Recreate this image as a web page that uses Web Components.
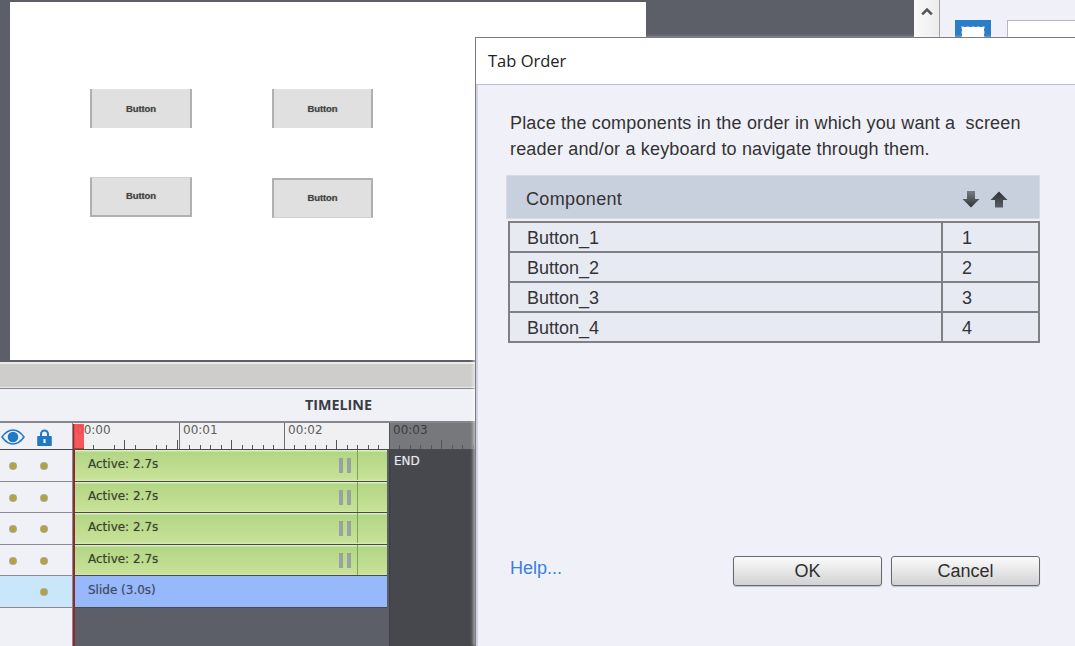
<!DOCTYPE html>
<html>
<head>
<meta charset="utf-8">
<title>Tab Order</title>
<style>
  html, body { margin: 0; height: 100%; overflow: hidden; background: #5c5f68; }
</style>
</head>
<body>
<app-shell>
  <stage-canvas slot="stage">
    <stage-button style="left:80px;top:87px;width:102px;height:39px" edges="sides">Button</stage-button>
    <stage-button style="left:262px;top:87px;width:101px;height:39px" edges="sides">Button</stage-button>
    <stage-button style="left:80px;top:175px;width:102px;height:40px" edges="bottom">Button</stage-button>
    <stage-button style="left:262px;top:176px;width:101px;height:40px" edges="top">Button</stage-button>
  </stage-canvas>
  <side-strip slot="side"></side-strip>
  <time-line slot="timeline">
    <track-row label="Active: 2.7s"></track-row>
    <track-row label="Active: 2.7s"></track-row>
    <track-row label="Active: 2.7s"></track-row>
    <track-row label="Active: 2.7s"></track-row>
    <track-row label="Slide (3.0s)" kind="slide"></track-row>
  </time-line>
  <tab-dialog slot="dialog" heading="Tab Order">
    <order-row name="Button_1" index="1"></order-row>
    <order-row name="Button_2" index="2"></order-row>
    <order-row name="Button_3" index="3"></order-row>
    <order-row name="Button_4" index="4" last></order-row>
  </tab-dialog>
</app-shell>

<script>
// page frame: top part, timeline below, dialog above everything
class AppShell extends HTMLElement {
  constructor() {
    super();
    this.attachShadow({ mode: "open" });
    this.shadowRoot.innerHTML = `
      <style>
        :host { display: flex; flex-direction: column; position: relative; width: 1075px; height: 646px; overflow: hidden; background: #5c5f68; }
        .top { display: flex; height: 362px; flex: none; overflow: hidden; }
      </style>
      <div class="top"><slot name="stage"></slot><slot name="side"></slot></div>
      <slot name="timeline"></slot>
      <slot name="dialog"></slot>
    `;
  }
}
customElements.define("app-shell", AppShell);

class StageCanvas extends HTMLElement {
  constructor() {
    super();
    this.attachShadow({ mode: "open" });
    this.shadowRoot.innerHTML = `
      <style>
        :host { display: block; flex: none; width: 914px; height: 362px; box-sizing: border-box; padding: 2px 268px 2px 10px; background: #5c5f68; }
        .paper { position: relative; height: 358px; background: #fff; }
      </style>
      <div class="paper"><slot></slot></div>
    `;
  }
}
customElements.define("stage-canvas", StageCanvas);

class StageButton extends HTMLElement {
  constructor() {
    super();
    this.attachShadow({ mode: "open" });
    const edge = "#b0b0b0";
    const kind = this.getAttribute("edges");
    const borders = {
      sides: `border-left:2px solid ${edge};border-right:2px solid ${edge};`,
      bottom: `border:1px solid #d0d0d0;border-left:2px solid ${edge};border-right:2px solid ${edge};border-bottom:2px solid ${edge};padding-bottom:2px;`,
      top: `border:1px solid #d0d0d0;border-left:2px solid ${edge};border-right:2px solid ${edge};border-top:2px solid ${edge};padding-bottom:2px;`,
    }[kind];
    this.shadowRoot.innerHTML = `
      <style>
        :host { display: flex; position: absolute; box-sizing: border-box; ${borders} background: #e0e0e0; align-items: center; justify-content: center;
          font: bold 9.500px "Liberation Sans", sans-serif; letter-spacing: -.1px; color: #444; text-shadow: 0 0 1px rgba(60,60,60,.5); }
      </style>
      <slot></slot>
    `;
  }
}
customElements.define("stage-button", StageButton);

// scrollbar and the bit of properties panel at the top right
class SideStrip extends HTMLElement {
  constructor() {
    super();
    this.attachShadow({ mode: "open" });
    this.shadowRoot.innerHTML = `
      <style>
        :host { display: flex; flex: 1; background: #f0f1f8; }
        .scroll { flex: none; width: 26px; box-sizing: border-box; border-right: 1px solid #a0a0a0; background: linear-gradient(90deg, #fafafa, #ececec); display: flex; justify-content: center; padding-top: 7px; }
        .scroll svg { display: block; }
        .panel { flex: 1; display: flex; align-items: flex-start; gap: 16px; padding: 20px 0 0 15px; overflow: hidden; }
        .swatch { flex: none; width: 36px; height: 40px; box-sizing: border-box; border: 7px solid #2a7dc9; background: #fff; outline: 1px dashed #8aa9c9; outline-offset: -7px; }
        .field { flex: 1; height: 40px; box-sizing: border-box; border: 1px solid #b4b4cc; border-width: 1px 0 0 1px; background: #fff; }
      </style>
      <div class="scroll">
        <svg width="12" height="9" viewBox="0 0 12 9"><path d="M1.2 7.4 6 2.6l4.8 4.8" fill="none" stroke="#555" stroke-width="2.6"/></svg>
      </div>
      <div class="panel"><div class="swatch"></div><div class="field"></div></div>
    `;
  }
}
customElements.define("side-strip", SideStrip);

class TimeLine extends HTMLElement {
  constructor() {
    super();
    this.attachShadow({ mode: "open" });
    const labels = ["00:00", "00:01", "00:02", "00:03"];
    const cells = labels
      .map((t, i) => `<div class="cell ${i === 3 ? "past" : ""} ${i === 0 ? "first" : ""}">${t}</div>`)
      .join("");
    this.shadowRoot.innerHTML = `
      <style>
        :host { display: flex; flex-direction: column; flex: 1; position: relative; min-height: 0; font-family: "DejaVu Sans", sans-serif; }
        .band { height: 23px; flex: none; background: #cfcdcc; border-top: 2px solid #eceaea; border-bottom: 1px solid #e8e8ea; }
        .title { height: 33px; flex: none; box-sizing: border-box; border-top: 1px solid #86868c; background: #f0f1f6; padding: 6px 0 0 305px; font: bold 14.300px "Open Sans", sans-serif; color: #3a3d45; }
        .head { display: flex; flex: none; border-top: 2px solid #86868c; border-bottom: 1px solid #4a4a4e; box-sizing: border-box; height: 29px; }
        .icons { flex: none; width: 73px; box-sizing: border-box; background: #f0f1f6; border-right: 1px solid #8a8a90; display: flex; align-items: center; padding: 2px 0 0 1px; gap: 12px; }
        .ruler { flex: 1; display: flex; }
        .cell { flex: none; width: 105px; box-sizing: border-box; border-left: 1px solid #6e6e6e; padding: 0 0 0 3px; font-size: 12px; line-height: 15px; color: #5d5d5d; background-color: #f0f0f2;
          background-image: repeating-linear-gradient(90deg, transparent 0 9.5px, #555 9.5px 10.5px), repeating-linear-gradient(90deg, transparent 0 51.5px, #555 51.5px 52.5px);
          background-size: 100% 4px, 100% 9px; background-position: bottom, bottom; background-repeat: no-repeat; }
        .cell.first { width: 106px; border-left: 0; padding-left: 3px; }
        .cell.past { flex: 1; background-color: #77787c; color: #3c3c3e; border-left-color: #555; }
        .body { flex: 1; display: flex; min-height: 0; }
        .rows { flex: none; width: 389px; display: flex; flex-direction: column; background: #5c5f68; position: relative; }
        .filler { flex: 1; width: 73px; box-sizing: border-box; background: #f0f1f6; border-right: 1px solid #8a8a90; }
        .end { flex: 1; background: #47484d; border-left: 1px solid #3d3d40; color: #e6e8ec; font-size: 12px; padding: 4px 0 0 4px; text-shadow: 0 0 1px rgba(230,232,236,.5); }
        .needle { position: absolute; left: 73px; top: 62px; bottom: 0; width: 2px; background: #8e2a2e; }
        .flag { position: absolute; left: 74px; top: 62px; width: 10px; height: 25px; background: rgba(244,71,77,.9); box-sizing: border-box; border-bottom: 1px solid #c33; }
      </style>
      <div class="band"></div>
      <div class="title">TIMELINE</div>
      <div class="head">
        <div class="icons">
          <svg width="24" height="16" viewBox="0 0 24 16"><path d="M1 8C5 2.400 8.500 1 12 1s7 1.400 11 7c-4 5.600-7.500 7-11 7S5 13.600 1 8Z" fill="none" stroke="#2079c7" stroke-width="1.600"/><circle cx="12" cy="8" r="5.300" fill="#2079c7"/></svg>
          <svg width="15" height="17" viewBox="0 0 15 17"><path d="M4 7.500V5a3.500 3.500 0 0 1 7 0v2.500" fill="none" stroke="#2079c7" stroke-width="2"/><path d="M1 7h13a.8.8 0 0 1 .8.8v8.400a.8.8 0 0 1-.8.8H1a.8.8 0 0 1-.8-.8V7.800A.8.8 0 0 1 1 7Z" fill="#2079c7"/><rect x="6.500" y="10" width="2" height="4" fill="#fff"/></svg>
        </div>
        <div class="ruler">${cells}</div>
      </div>
      <div class="body">
        <div class="rows"><slot></slot><div class="filler"></div></div>
        <div class="end">END</div>
      </div>
      <div class="needle"></div>
      <div class="flag"></div>
    `;
  }
}
customElements.define("time-line", TimeLine);

class TrackRow extends HTMLElement {
  constructor() {
    super();
    this.attachShadow({ mode: "open" });
    const slide = this.getAttribute("kind") === "slide";
    this.shadowRoot.innerHTML = `
      <style>
        :host { display: flex; height: 31.500px; flex: none; box-sizing: border-box; }
        .dots { flex: none; width: 73px; box-sizing: border-box; background: ${slide ? "#c9e6fb" : "#f0f1f6"}; border-right: 1px solid #8a8a90; border-bottom: 1px solid #8a8a90; display: flex; align-items: center; padding: 2px 0 0 9.500px; gap: 25.500px; }
        .dot { flex: none; width: 6px; height: 6px; border-radius: 50%; background: #b5a23c; box-shadow: 0 0 0 1px #a3ae98; }
        .dot.off { visibility: hidden; }
        .bar { flex: none; width: 312px; margin-left: 2px; box-sizing: border-box; display: flex; align-items: flex-start; border-bottom: 1px solid #4a4a4e;
          padding: 7px 0 0 13px; font-size: 12px; color: #3a3f30; text-shadow: 0 0 1px rgba(60,64,50,.4);
          background: ${slide ? "#97b9fb" : "linear-gradient(#dcedc0 0 1px, #b2d684 2px, #c8e298 29px, #dcedc0)"}; ${slide ? "color:#3f4a66;" : ""} }
        .label { flex: 1; }
        .pause { flex: none; width: 12px; height: 15px; margin: 1px 6px 0 0; background: linear-gradient(90deg, #98a3a0 0 4.500px, transparent 4.500px 8px, #98a3a0 8px); }
        .mark { flex: none; width: 1px; height: 30px; margin: -7px 29px 0 0; background: #7ea54f; }
      </style>
      <div class="dots"><span class="dot ${slide ? "off" : ""}"></span><span class="dot"></span></div>
      <div class="bar">
        <span class="label">${this.getAttribute("label")}</span>
        ${slide ? "" : '<span class="pause"></span><span class="mark"></span>'}
      </div>
    `;
  }
}
customElements.define("track-row", TrackRow);

class TabDialog extends HTMLElement {
  constructor() {
    super();
    this.attachShadow({ mode: "open" });
    const arrow = (id, pts, from, to) => `
      <svg width="18" height="17" viewBox="0 0 18 17"><defs><linearGradient id="${id}" x1="0" y1="0" x2="0" y2="1"><stop offset="0" stop-color="${from}"/><stop offset="1" stop-color="${to}"/></linearGradient></defs><polygon points="${pts}" fill="url(#${id})"/></svg>`;
    this.shadowRoot.innerHTML = `
      <style>
        :host { display: flex; flex-direction: column; position: absolute; left: 475px; top: 37px; right: 0; bottom: 0; box-sizing: border-box; border: 1px solid #7c7c80; border-width: 1px 0 0 1px; background: #fff; box-shadow: -2px 0 3px rgba(255,255,255,.5); font: 18px "Liberation Sans", sans-serif; color: #333; }
        .bar { height: 47px; flex: none; box-sizing: border-box; padding: 11px 0 0 12px; font: 16.500px "Open Sans", sans-serif; color: #222; border-bottom: 1px solid #b9bdd0; }
        .content { flex: 1; display: flex; flex-direction: column; background: #f0f1f8; border-left: 2px solid #d0d3e2; padding: 25px 35px 60px 28px; min-height: 0; }
        .intro { margin: 0 0 13px 4px; line-height: 26px; white-space: nowrap; letter-spacing: .17px; }
        .thead { display: flex; align-items: center; height: 44px; flex: none; box-sizing: border-box; margin: 0 0 2px 0; padding: 3px 31px 0 19px; background: #c9d0dd; border: 1px solid #d6dbe7; }
        .thead .name { flex: 1; letter-spacing: .35px; position: relative; top: 1px; }
        .arrows { display: flex; gap: 10px; padding-top: 2px; }
        .rows { margin-left: 2px; }
        .foot { margin-top: auto; display: flex; align-items: flex-start; padding-left: 4px; }
        .help { flex: 1; color: #3c7de0; margin-top: 2px; }
        .btns { display: flex; gap: 9px; }
        svg { display: block; }
      </style>
      <div class="bar">${this.getAttribute("heading")}</div>
      <div class="content">
        <p class="intro">Place the components in the order in which you want a&nbsp; screen<br>reader and/or a keyboard to navigate through them.</p>
        <div class="thead">
          <span class="name">Component</span>
          <span class="arrows">
            ${arrow("down", "5,0 13,0 13,8 17.500,8 9,16.500 0.500,8 5,8", "#7a7d84", "#2f3136")}
            ${arrow("up", "9,0.500 17.500,9 13,9 13,16.500 5,16.500 5,9 0.500,9", "#2f3136", "#5a5d64")}
          </span>
        </div>
        <div class="rows"><slot></slot></div>
        <div class="foot">
          <span class="help">Help...</span>
          <div class="btns"><dlg-button>OK</dlg-button><dlg-button>Cancel</dlg-button></div>
        </div>
      </div>
    `;
  }
}
customElements.define("tab-dialog", TabDialog);

class OrderRow extends HTMLElement {
  constructor() {
    super();
    this.attachShadow({ mode: "open" });
    const last = this.hasAttribute("last");
    this.shadowRoot.innerHTML = `
      <style>
        :host { display: grid; grid-template-columns: 433px 97px; height: ${last ? 32 : 30}px; box-sizing: border-box; background: #e8eaf3; border: 2px solid #7f7f84; border-bottom-width: ${last ? 2 : 0}px; }
        div { display: flex; align-items: center; box-sizing: border-box; padding-top: 2px; }
        .name { padding-left: 17px; border-right: 2px solid #7f7f84; }
        .num { padding-left: 19px; }
      </style>
      <div class="name">${this.getAttribute("name")}</div>
      <div class="num">${this.getAttribute("index")}</div>
    `;
  }
}
customElements.define("order-row", OrderRow);

class DlgButton extends HTMLElement {
  constructor() {
    super();
    this.attachShadow({ mode: "open" });
    this.shadowRoot.innerHTML = `
      <style>
        :host { display: flex; align-items: center; justify-content: center; width: 149px; height: 30px; box-sizing: border-box; border: 1px solid #66686e; border-radius: 3px; background: linear-gradient(#fbfbfb, #d2d2d4); box-shadow: 0 1px 1px rgba(0,0,0,.2); color: #2e2e2e; padding-top: 1px; }
      </style>
      <slot></slot>
    `;
  }
}
customElements.define("dlg-button", DlgButton);
</script>
</body>
</html>
